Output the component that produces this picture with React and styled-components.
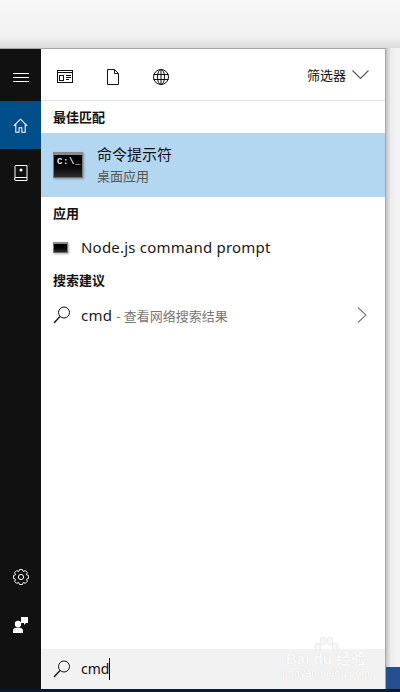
import React from "react";
import styled, { createGlobalStyle } from "styled-components";

const Global = createGlobalStyle`
  html, body { margin: 0; padding: 0; }
  body { width: 400px; height: 692px; overflow: hidden; background: #f4f4f4; }
  * { box-sizing: border-box; }
`;

const Desktop = styled.div`
  width: 400px;
  height: 692px;
  display: flex;
  flex-direction: column;
  font-family: "Noto Sans", "Noto Sans CJK SC", sans-serif;
  color: #111;
`;
const TopGap = styled.div`
  height: 48px;
  flex: none;
  background: linear-gradient(#f6f6f6 0, #f2f2f2 36px, #dcdcdc 47px);
`;
const Middle = styled.div`
  flex: 1;
  display: flex;
  min-height: 0;
`;
const Taskbar = styled.div`
  height: 3px;
  flex: none;
  background: #0b1a2c;
`;
const StartMenu = styled.div`
  width: 386px;
  flex: none;
  display: flex;
  border-right: 1px solid #a6a6a6;
  border-top: 1px solid #a6a6a6;
  position: relative;
`;
const RightGutter = styled.div`
  flex: 1;
  display: flex;
  flex-direction: column;
  justify-content: flex-end;
  background: linear-gradient(90deg, #c4c4c4 0, #eeeeee 5px, #f4f4f4 12px);
`;
const Wallpaper = styled.div`
  height: 22px;
  background: #24508f;
`;
const Sidebar = styled.nav`
  width: 41px;
  flex: none;
  display: flex;
  flex-direction: column;
  background: #111111;
`;
const SideButton = styled.div`
  height: ${(p) => p.$h || 48}px;
  padding-top: ${(p) => p.$top || 0}px;
  flex: none;
  display: flex;
  align-items: center;
  justify-content: center;
  background: ${(p) => (p.$active ? "#004f8a" : "transparent")};
`;
const SideSpacer = styled.div`
  flex: 1;
`;
const SideFooter = styled.div`
  height: 40px;
  flex: none;
`;
const Panel = styled.div`
  flex: 1;
  display: flex;
  flex-direction: column;
  background: #fff;
  min-width: 0;
`;
const Toolbar = styled.div`
  height: 52px;
  flex: none;
  display: flex;
  align-items: center;
  padding: 0 16px;
  border-bottom: 1px solid #e2e2e2;
`;
const ToolIcon = styled.div`
  width: 16px;
  height: 16px;
  margin: 4px 32px 0 0;
  display: flex;
  align-items: center;
  justify-content: center;
`;
const Filter = styled.div`
  margin-left: auto;
  display: flex;
  align-items: center;
  gap: 6px;
  font-size: 13px;
  line-height: 18px;
`;
const SectionLabel = styled.div`
  height: ${(p) => p.$h}px;
  flex: none;
  padding: ${(p) => p.$top}px 0 0 12px;
  font-size: 13px;
  line-height: 16px;
  font-weight: 700;
  color: #111;
`;
const BestMatch = styled.div`
  height: 64px;
  flex: none;
  display: flex;
  align-items: center;
  padding: 0 0 1px 12px;
  background: #b3d6f1;
`;
const TerminalIcon = styled.div`
  width: ${(p) => (p.$small ? 15 : 30)}px;
  height: ${(p) => (p.$small ? 11 : 26)}px;
  flex: none;
  background: linear-gradient(#000 45%, #2c2c2c 100%);
  border-top: ${(p) => (p.$small ? 2 : 3)}px solid #8a8a8a;
  border-left: 1px solid #7a7a7a;
  border-right: 1px solid #7a7a7a;
  border-bottom: 1px solid #6a6a6a;
  color: #f2f2f2;
  font-family: "Liberation Mono", monospace;
  font-size: ${(p) => (p.$small ? 0 : 9)}px;
  font-weight: 700;
  letter-spacing: 0.6px;
  line-height: 10px;
  padding: 2px 0 0 3px;
  white-space: pre;
  box-shadow: 1px 1px 2px rgba(0, 0, 0, 0.3);
`;
const BestText = styled.div`
  margin-left: 14px;
  display: flex;
  flex-direction: column;
  gap: 4px;
`;
const BestTitle = styled.div`
  font-size: 15px;
  line-height: 20px;
  color: #111;
`;
const BestSub = styled.div`
  font-size: 13px;
  line-height: 17px;
  color: #555;
`;
const ResultRow = styled.div`
  height: ${(p) => p.$h}px;
  flex: none;
  display: flex;
  align-items: center;
  padding: 0 18px 0 12px;
`;
const ResultIconSlot = styled.div`
  width: 28px;
  flex: none;
  display: flex;
  align-items: center;
`;
const ResultText = styled.span`
  font-size: 15px;
  line-height: 20px;
  letter-spacing: 0.2px;
  white-space: nowrap;
  color: #1a1a1a;
`;
const Hint = styled.span`
  font-size: 13px;
  letter-spacing: 0;
  color: #777;
`;
const Chevron = styled.div`
  margin-left: auto;
  display: flex;
`;
const Grow = styled.div`
  flex: 1;
`;
const SearchBar = styled.div`
  height: 40px;
  flex: none;
  display: flex;
  align-items: center;
  padding: 0 0 0 12px;
  background: #f2f2f2;
`;
const SearchValue = styled.span`
  font-size: 14px;
  line-height: 20px;
  color: #111;
`;
const Caret = styled.span`
  width: 1px;
  height: 22px;
  background: #000;
`;
const Watermark = styled.div`
  position: absolute;
  right: 14px;
  bottom: 9px;
  width: 90px;
  display: flex;
  flex-direction: column;
  align-items: center;
  color: #fafafa;
  text-shadow: 0 0 1px rgba(0, 0, 0, 0.12);
  pointer-events: none;
`;
const MarkTitle = styled.div`
  font-family: "Liberation Sans", "Noto Sans CJK SC", sans-serif;
  font-size: 15px;
  line-height: 15px;
  font-weight: 700;
  white-space: nowrap;
  margin-top: -3px;
`;
const MarkUrl = styled.div`
  font-family: "Liberation Sans", sans-serif;
  font-size: 10px;
  line-height: 12px;
  font-weight: 700;
  white-space: nowrap;
  margin-top: 2px;
`;

const Stroke = ({ size = 16, w, h, color = "#111", sw = 1, children }) => (
  <svg
    width={w || size}
    height={h || size}
    viewBox={`0 0 ${w || size} ${h || size}`}
    fill="none"
    stroke={color}
    strokeWidth={sw}
  >
    {children}
  </svg>
);

const SearchGlyph = () => (
  <Stroke size={18}>
    <circle cx="11" cy="6.5" r="5.5" />
    <path d="M7 10.5 L1 17" strokeWidth="1.3" />
  </Stroke>
);

const gearPath = (() => {
  const pts = [];
  for (let i = 0; i < 8; i++) {
    const a = (i * Math.PI) / 4;
    const d = Math.PI / 14;
    const p = (r, t) => `${(8 + r * Math.cos(t)).toFixed(2)} ${(8 + r * Math.sin(t)).toFixed(2)}`;
    pts.push(`${i ? "L" : "M"}${p(6, a - d * 1.7)} L${p(7.7, a - d * 0.8)} L${p(7.7, a + d * 0.8)} L${p(6, a + d * 1.7)}`);
  }
  return pts.join(" ") + " Z";
})();

export default function App() {
  return (
    <Desktop>
      <Global />
      <TopGap />
      <Middle>
        <StartMenu>
          <Sidebar>
            <SideButton $h={52} $top={5}>
              <Stroke w={16} h={10} color="#fff">
                <path d="M0 .5H16M0 4.5H16M0 8.5H16" />
              </Stroke>
            </SideButton>
            <SideButton $active>
              <svg width="15" height="15" viewBox="0 0 16 16" fill="none" stroke="#fff" strokeWidth="1.1">
                <path d="M.8 8.5 8 1.2l7.2 7.3M3 6.5v8.8h3.5v-5h3v5H13V6.5" />
              </svg>
            </SideButton>
            <SideButton>
              <Stroke w={14} h={16} color="#fff">
                <path d="M1.5 13V1.5a1 1 0 0 1 1-1h11v12H2.5a1 1 0 0 0 0 3h11v-3" transform="translate(-.5 0)" />
                <circle cx="7" cy="5" r="1.5" fill="#fff" stroke="none" />
              </Stroke>
            </SideButton>
            <SideSpacer />
            <SideButton>
              <Stroke color="#fff">
                <path d={gearPath} />
                <circle cx="8" cy="8" r="2.6" />
              </Stroke>
            </SideButton>
            <SideButton>
              <svg width="15" height="16" viewBox="0 0 15 16" fill="#fff">
                <path d="M8 0h7v6h-2l-2 2V6H8z" />
                <circle cx="5" cy="7" r="3.2" />
                <path d="M0 16v-2.5C0 11.5 2 10.5 5 10.5s5 1 5 3V16z" />
              </svg>
            </SideButton>
            <SideFooter />
          </Sidebar>
          <Panel>
            <Toolbar>
              <ToolIcon>
                <Stroke>
                  <rect x=".5" y="1.5" width="15" height="12" />
                  <path d="M0 3.5H16" />
                  <rect x="2.5" y="6.5" width="4" height="5" />
                  <path d="M9 6.5h5M9 8.5h5M9 10.5h3" />
                </Stroke>
              </ToolIcon>
              <ToolIcon>
                <Stroke>
                  <path d="M2.5 .5h7l4 4v11h-11zM9.5 .5v4h4" />
                </Stroke>
              </ToolIcon>
              <ToolIcon>
                <Stroke>
                  <circle cx="8" cy="8" r="7.5" />
                  <ellipse cx="8" cy="8" rx="3.5" ry="7.5" />
                  <path d="M.5 5.5h15M.5 10.5h15M8 .5v15" />
                </Stroke>
              </ToolIcon>
              <Filter>
                筛选器
                <Stroke w={17} h={9} color="#555" sw={1.1}>
                  <path d="M.5 .5 8.5 8.5l8-8" />
                </Stroke>
              </Filter>
            </Toolbar>
            <SectionLabel $h={32} $top={8}>最佳匹配</SectionLabel>
            <BestMatch>
              <TerminalIcon>{"C:\\_"}</TerminalIcon>
              <BestText>
                <BestTitle>命令提示符</BestTitle>
                <BestSub>桌面应用</BestSub>
              </BestText>
            </BestMatch>
            <SectionLabel $h={33} $top={8}>应用</SectionLabel>
            <ResultRow $h={34}>
              <ResultIconSlot>
                <TerminalIcon $small />
              </ResultIconSlot>
              <ResultText>Node.js command prompt</ResultText>
            </ResultRow>
            <SectionLabel $h={34} $top={8}>搜索建议</SectionLabel>
            <ResultRow $h={34}>
              <ResultIconSlot>
                <SearchGlyph />
              </ResultIconSlot>
              <ResultText>
                cmd <Hint>- 查看网络搜索结果</Hint>
              </ResultText>
              <Chevron>
                <Stroke w={10} h={16} color="#777" sw={1.1}>
                  <path d="M1 .5 9 8l-8 7.5" />
                </Stroke>
              </Chevron>
            </ResultRow>
            <Grow />
            <SearchBar>
              <ResultIconSlot>
                <SearchGlyph />
              </ResultIconSlot>
              <SearchValue>cmd</SearchValue>
              <Caret />
            </SearchBar>
          </Panel>
          <Watermark>
            <svg width="28" height="18" viewBox="0 0 28 18" fill="#f6f6f6" stroke="#ececec">
              <ellipse cx="6" cy="11" rx="3" ry="4" />
              <ellipse cx="11" cy="5" rx="3" ry="4" />
              <ellipse cx="18" cy="5" rx="3" ry="4" />
              <ellipse cx="23" cy="11" rx="3" ry="4" />
            </svg>
            <MarkTitle>Bai du 经验</MarkTitle>
            <MarkUrl>jingyan.baidu.com</MarkUrl>
          </Watermark>
        </StartMenu>
        <RightGutter>
          <Wallpaper />
        </RightGutter>
      </Middle>
      <Taskbar />
    </Desktop>
  );
}
